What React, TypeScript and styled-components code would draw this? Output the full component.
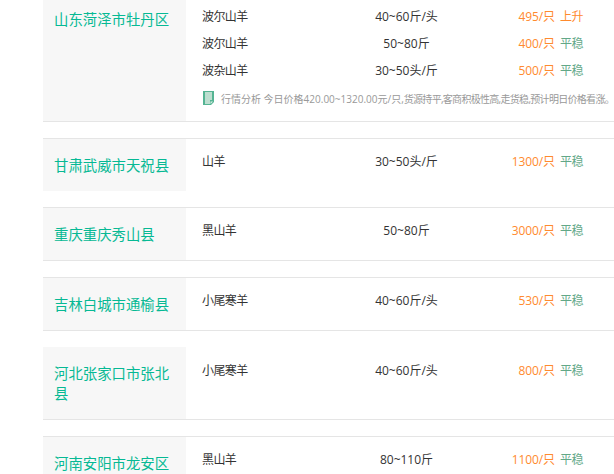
import React from "react";
import styled, { createGlobalStyle } from "styled-components";

const Global = createGlobalStyle`
  html, body { margin: 0; padding: 0; background: #fff; overflow: hidden; width: 614px; height: 474px; }
  body { font-family: "Open Sans", "Noto Sans CJK SC", sans-serif; }
`;
const List = styled.div`
  display: flex; flex-direction: column; gap: 16px;
  margin: -7px 0 0 43px; width: 571px;
`;
const Row = styled.div<{ $top?: boolean; $bottom?: boolean }>`
  display: flex;
  border-top: ${(p) => (p.$top ? "1px solid #e5e5e5" : "none")};
  border-bottom: ${(p) => (p.$bottom ? "1px solid #e5e5e5" : "none")};
`;
const Place = styled.div`
  width: 143px; flex: none; box-sizing: border-box; padding: 17px 12px 15px 11px;
  background: #f7f7f7; color: #06b994; font-size: 14.4px; line-height: 20px;
`;
const Body = styled.div<{ $top?: boolean }>`
  flex: 1; min-width: 0; padding: ${(p) => (p.$top ? "9px" : "10px")} 0 0 16px; font-size: 12px; color: #333;
`;
const Line = styled.div`
  display: flex; height: 27px; line-height: 27px; align-items: center;
`;
const Breed = styled.span` width: 130px; flex: none; letter-spacing: -0.6px; `;
const Weight = styled.span` width: 149px; flex: none; text-align: center; `;
const Price = styled.span` width: 74px; flex: none; text-align: right; color: #ff8a2e; letter-spacing: -0.1px; `;
const Trend = styled.span<{ $up?: boolean }>`
  margin-left: 5px; letter-spacing: -0.5px; color: ${(p) => (p.$up ? "#ff8a2e" : "#62a888")};
`;
const Note = styled.div`
  display: flex; align-items: center; gap: 7px; height: 28px; margin: 0 0 9px 1px;
  font-size: 10px; color: #999; white-space: nowrap;
`;
const NoteTail = styled.span`
  letter-spacing: -0.7px;
`;
const IconSvg = styled.svg`
  flex: none; width: 11px; height: 14px;
`;
const DocIcon = () => (
  <IconSvg viewBox="0 0 11 14">
    <path d="M0 0H11V11L8 14H0Z" fill="#55b493" />
    <path d="M2 1H9V9H7V13H2Z" fill="#bcdecf" />
    <path d="M7.5 10.5H10L7.5 13Z" fill="#dceee6" />
  </IconSvg>
);

const rows = [
  { place: "山东菏泽市牡丹区", top: false, bottom: true, items: [["波尔山羊","40~60斤/头","495/只","上升"],["波尔山羊","50~80斤","400/只","平稳"],["波杂山羊","30~50头/斤","500/只","平稳"]], note: ["行情分析 今日价格420.00~1320.00元/只,", "货源持平,客商积极性高,走货稳,预计明日价格看涨。"] },
  { place: "甘肃武威市天祝县", top: true, bottom: false, items: [["山羊","30~50头/斤","1300/只","平稳"]] },
  { place: "重庆重庆秀山县", top: true, bottom: true, items: [["黑山羊","50~80斤","3000/只","平稳"]] },
  { place: "吉林白城市通榆县", top: true, bottom: true, items: [["小尾寒羊","40~60斤/头","530/只","平稳"]] },
  { place: "河北张家口市张北县", top: false, bottom: true, items: [["小尾寒羊","40~60斤/头","800/只","平稳"]] },
  { place: "河南安阳市龙安区", top: true, bottom: false, items: [["黑山羊","80~110斤","1100/只","平稳"]] },
];

export default function App() {
  return (
    <>
      <Global />
      <List>
        {rows.map((r) => (
          <Row key={r.place} $top={r.top} $bottom={r.bottom}>
            <Place>{r.place}</Place>
            <Body $top={r.top}>
              {r.items.map((it, i) => (
                <Line key={i}>
                  <Breed>{it[0]}</Breed>
                  <Weight>{it[1]}</Weight>
                  <Price>{it[2]}</Price>
                  <Trend $up={it[3] === "上升"}>{it[3]}</Trend>
                </Line>
              ))}
              {r.note && (
                <Note>
                  <DocIcon />
                  <span>
                    {r.note[0]}
                    <NoteTail>{r.note[1]}</NoteTail>
                  </span>
                </Note>
              )}
            </Body>
          </Row>
        ))}
      </List>
    </>
  );
}
